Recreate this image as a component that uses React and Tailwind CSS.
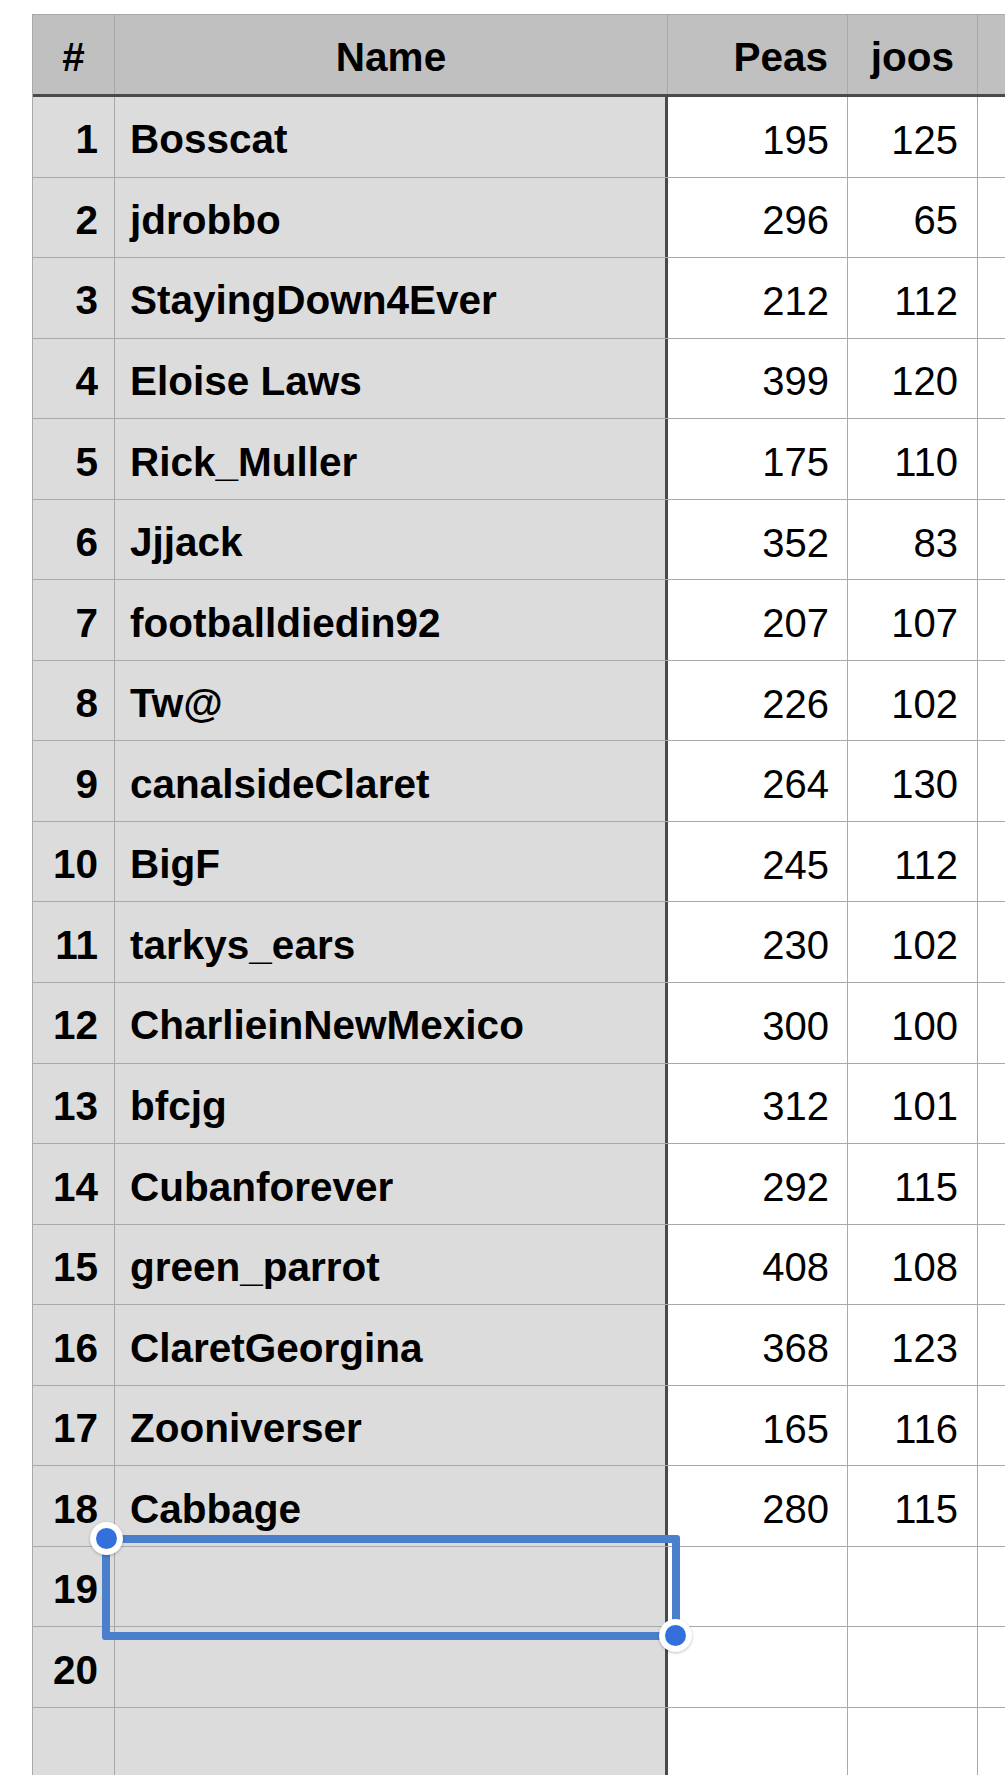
import React from 'react';

const rows = [
  ['Bosscat', 195, 125],
  ['jdrobbo', 296, 65],
  ['StayingDown4Ever', 212, 112],
  ['Eloise Laws', 399, 120],
  ['Rick_Muller', 175, 110],
  ['Jjjack', 352, 83],
  ['footballdiedin92', 207, 107],
  ['Tw@', 226, 102],
  ['canalsideClaret', 264, 130],
  ['BigF', 245, 112],
  ['tarkys_ears', 230, 102],
  ['CharlieinNewMexico', 300, 100],
  ['bfcjg', 312, 101],
  ['Cubanforever', 292, 115],
  ['green_parrot', 408, 108],
  ['ClaretGeorgina', 368, 123],
  ['Zooniverser', 165, 116],
  ['Cabbage', 280, 115],
  ['', '', ''],
  ['', '', ''],
  ['', '', ''],
];

const App = () => {
  return (
    <div
      className="relative w-[1005px] h-[1775px] overflow-hidden bg-white pt-[14px] pl-[32px] text-black"
      style={{ fontFamily: '"Liberation Sans", Arial, Helvetica, sans-serif' }}
    >
      <div className="w-[1100px] border-l border-t border-[#a9a9a9]">
        {/* Header */}
        <div className="flex h-[82px] bg-[#c0c0c0] border-b-[3px] border-b-[#4a4a4a] text-[40.5px] font-bold">
          <div className="w-[82px] shrink-0 flex items-center justify-center pt-[6px] border-r border-[#a9a9a9]">#</div>
          <div className="w-[553px] shrink-0 flex items-center justify-center pt-[6px] border-r border-[#a9a9a9]">Name</div>
          <div className="w-[180px] shrink-0 flex items-center justify-end pt-[6px] pr-[19px] border-r border-[#a9a9a9]">Peas</div>
          <div className="w-[130px] shrink-0 flex items-center justify-center pt-[6px] border-r border-[#a9a9a9]">joos</div>
          <div className="w-[150px] shrink-0" />
        </div>

        {/* Body */}
        {rows.map(([name, peas, joos], i) => (
          <div key={i} className="flex h-[80.55px] border-b border-[#a9a9a9]">
            <div className="w-[82px] shrink-0 flex items-center justify-end pt-[6px] pr-[16px] bg-[#dcdcdc] border-r border-[#a9a9a9] text-[40.5px] font-bold">
              {i < 20 ? i + 1 : ''}
            </div>
            <div className="w-[553px] shrink-0 flex items-center pt-[6px] pl-[15px] bg-[#dcdcdc] border-r-[3px] border-r-[#4a4a4a] text-[40.5px] font-bold whitespace-nowrap">
              {name}
            </div>
            <div className="w-[180px] shrink-0 flex items-center justify-end pt-[6px] pr-[18px] border-r border-[#a9a9a9] text-[40px]">
              {peas}
            </div>
            <div className="w-[130px] shrink-0 flex items-center justify-end pt-[6px] pr-[19px] border-r border-[#a9a9a9] text-[40px]">
              {joos}
            </div>
            <div className="w-[150px] shrink-0" />
          </div>
        ))}
      </div>

      {/* Selection */}
      <div className="absolute left-[102px] top-[1535px] w-[578px] h-[105px] border-[8px] border-[#4a7fcc] rounded-[3px]" />
      <div className="absolute left-[90px] top-[1522px] w-[33px] h-[33px] rounded-full bg-white shadow-[0_1px_3px_rgba(0,0,0,0.25)] flex items-center justify-center">
        <div className="w-[21px] h-[21px] rounded-full bg-[#3370dc]" />
      </div>
      <div className="absolute left-[659px] top-[1619px] w-[33px] h-[33px] rounded-full bg-white shadow-[0_1px_3px_rgba(0,0,0,0.25)] flex items-center justify-center">
        <div className="w-[21px] h-[21px] rounded-full bg-[#3370dc]" />
      </div>
    </div>
  );
};

export default App;
